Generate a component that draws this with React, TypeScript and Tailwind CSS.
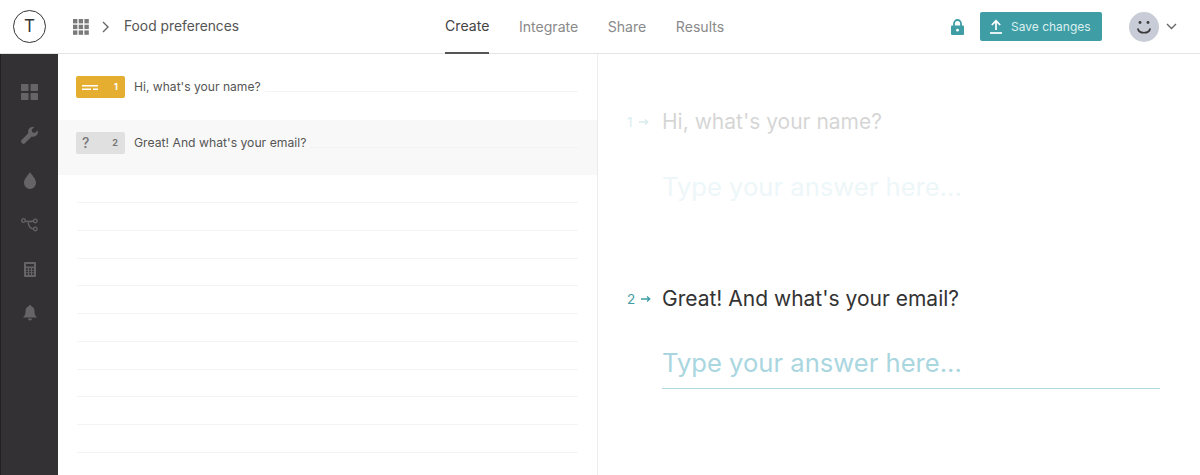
import React from 'react'

const font = { tabs: 'font-["Inter",sans-serif]' }

function GridIcon() {
  const cells = [0, 1, 2]
  return (
    <svg width="16" height="16" viewBox="0 0 16 16" fill="#7a7a7a">
      {cells.map(r => cells.map(c => <rect key={`${r}-${c}`} x={c * 5.7} y={r * 5.7} width="4.4" height="4.4" />))}
    </svg>
  )
}

function Lock() {
  return (
    <svg width="13" height="16" viewBox="0 0 13 16">
      <path d="M3 8V4.500a3.500 3.500 0 0 1 7 0V8" fill="none" stroke="#3f9ea5" strokeWidth="1.800" />
      <rect x="0" y="6.500" width="13" height="9.500" rx="1" fill="#3f9ea5" />
      <circle cx="6.500" cy="11.200" r="1.400" fill="#fff" />
    </svg>
  )
}

function Upload() {
  return (
    <svg width="14" height="15" viewBox="0 0 14 15" fill="none" stroke="#fff" strokeWidth="1.700">
      <path d="M7 11V2M2.800 6 7 1.800 11.200 6" />
      <path d="M1 14h12" />
    </svg>
  )
}

function Smiley() {
  return (
    <svg width="30" height="30" viewBox="0 0 30 30">
      <circle cx="15" cy="15" r="15" fill="#c8ccd6" />
      <circle cx="11" cy="10.500" r="1.400" fill="#3a3a3a" />
      <circle cx="19" cy="10.500" r="1.400" fill="#3a3a3a" />
      <path d="M9 17c1 5 11 5 12 0" fill="none" stroke="#3a3a3a" strokeWidth="1.700" strokeLinecap="round" />
    </svg>
  )
}

const sideIcons = [
  <svg key="a" width="17" height="16" viewBox="0 0 17 16" fill="#666467">
    <rect width="7.500" height="7" rx="0.800" /><rect x="9.500" width="7.500" height="7" rx="0.800" />
    <rect y="9" width="7.500" height="7" rx="0.800" /><rect x="9.500" y="9" width="7.500" height="7" rx="0.800" />
  </svg>,
  <svg key="b" width="17" height="17" viewBox="0 0 17 17" fill="#666467">
    <path d="M16.600 3.400 13.900 6l-2.600-.7-.7-2.600L13.200.2a4.600 4.600 0 0 0-5.800 5.900L.6 12.900a1.900 1.900 0 0 0 0 2.700l.6.6a1.900 1.900 0 0 0 2.700 0l6.900-6.800a4.600 4.600 0 0 0 5.800-6Z" />
  </svg>,
  <svg key="c" width="12" height="17" viewBox="0 0 12 17" fill="#666467">
    <path d="M6 0c1.500 3 6 6.500 6 11a6 6 0 0 1-12 0C0 6.500 4.500 3 6 0Z" />
  </svg>,
  <svg key="d" width="17" height="14" viewBox="0 0 17 14" fill="none" stroke="#666467" strokeWidth="1.300">
    <circle cx="2.500" cy="2.500" r="1.800" /><circle cx="14.300" cy="3" r="1.800" /><circle cx="14.300" cy="11" r="1.800" />
    <path d="M4.300 2.800c3 1 5 1 8.200.2M7 3.800c.5 4 2.500 6.800 5.500 7" />
  </svg>,
  <svg key="e" width="12" height="15" viewBox="0 0 12 15">
    <rect width="12" height="15" rx="1" fill="#666467" />
    <rect x="2" y="2" width="8" height="2.500" fill="#333133" />
    {[6.200, 8.700, 11.200].map(y => [2, 5, 8].map(x => <rect key={`${x}-${y}`} x={x} y={y} width="2" height="1.600" fill="#333133" />))}
  </svg>,
  <svg key="f" width="14" height="16" viewBox="0 0 14 16" fill="#666467">
    <path d="M7 0a1.200 1.200 0 0 1 1.200 1.300C10.500 2 11.500 3.800 11.500 6.500c0 3 .9 4.500 2.500 6H0c1.600-1.500 2.500-3 2.500-6 0-2.700 1-4.500 3.300-5.200A1.200 1.200 0 0 1 7 0Z" />
    <path d="M5 13.500h4a2 2 0 0 1-4 0Z" />
  </svg>,
]

function Arrow({ color }: { color: string }) {
  return (
    <svg width="10" height="8" viewBox="0 0 10 8" fill="none" stroke={color} strokeWidth="1.300">
      <path d="M0 4h8.500M6 1.500 8.800 4 6 6.500" />
    </svg>
  )
}

function Line() {
  return <div className="h-[27.75px] mx-[19px] border-b border-[#f4f4f4]" />
}

export default function App() {
  return (
    <div className={`h-[475px] w-[1200px] flex flex-col overflow-hidden bg-white ${font.tabs}`}>
      {/* top bar */}
      <header className="h-[54px] shrink-0 flex items-center border-b border-[#e4e4e4]">
        <div className="ml-[13px] w-[33px] h-[33px] rounded-full border border-[#333] flex items-center justify-center text-[17px] text-[#333]">T</div>
        <div className="ml-[27px] flex items-center">
          <GridIcon />
          <svg className="ml-[13px]" width="8" height="12" viewBox="0 0 8 12" fill="none" stroke="#666" strokeWidth="1.400"><path d="M1 1l5 5-5 5" /></svg>
          <span className="ml-[14px] text-[13.800px] text-[#555]">Food preferences</span>
        </div>
        <nav className="ml-[206px] h-full flex items-stretch gap-[29.500px] text-[14.100px] text-[#8a8a8a]">
          <span className="flex items-center text-[#444] border-b-2 border-[#555] -mb-px">Create</span>
          <span className="flex items-center">Integrate</span>
          <span className="flex items-center">Share</span>
          <span className="flex items-center">Results</span>
        </nav>
        <div className="ml-auto flex items-center">
          <Lock />
          <div className="ml-[16px] w-[122px] h-[29px] rounded-[2px] bg-[#3f9ea5] flex items-center pl-[9px] text-[12px] text-[#dcefef]">
            <Upload />
            <span className="ml-[8px]">Save changes</span>
          </div>
          <div className="ml-[27px]"><Smiley /></div>
          <svg className="ml-[7px] mr-[23px]" width="11" height="7" viewBox="0 0 11 7" fill="none" stroke="#666" strokeWidth="1.400"><path d="M1 1l4.500 4.500L10 1" /></svg>
        </div>
      </header>

      <div className="flex-1 flex min-h-0">
        {/* sidebar */}
        <aside className="w-[58px] shrink-0 bg-[#333133] border-l border-[#222] flex flex-col items-center pt-[29px] gap-[27.400px] [&>div]:h-[17px] [&>div]:flex [&>div]:items-center">
          {sideIcons.map((icon, i) => <div key={i}>{icon}</div>)}
        </aside>

        {/* question list */}
        <section className="w-[540px] shrink-0 border-r border-[#ececec] overflow-hidden">
          <div className="h-[38px] mx-[19px] border-b border-[#f4f4f4] flex items-end">
            <div className="mb-[-7px] ml-[-1px] bg-white pr-[4px] flex items-center">
              <div className="w-[49px] h-[22px] rounded-[2px] bg-[#e6ae30] flex items-center justify-between px-[6px] text-white text-[9px] font-bold">
                <svg width="16" height="5" viewBox="0 0 16 5" fill="#fff"><rect width="16" height="1.500" /><rect y="3.500" width="9" height="1.500" /><rect x="11" y="3.500" width="5" height="1.500" /></svg>
                <span className="mr-[1px]">1</span>
              </div>
              <span className="ml-[9px] mt-px text-[12.100px] text-[#555]">Hi, what's your name?</span>
            </div>
          </div>
          <div className="h-[27.750px]" />
          <div className="h-[55.500px] bg-[#f8f8f8] px-[19px]">
            <div className="h-[27.750px] border-b border-[#f2f2f2] flex items-end">
              <div className="mb-[-7px] ml-[-1px] bg-[#f8f8f8] pr-[4px] flex items-center">
                <div className="w-[49px] h-[22px] rounded-[2px] bg-[#e0e0e0] flex items-center justify-between px-[6px] text-[#777]">
                  <span className="text-[14px] leading-none font-medium">?</span>
                  <span className="text-[9px] font-bold mr-[1px]">2</span>
                </div>
                <span className="ml-[9px] mt-px text-[12.200px] text-[#555]">Great! And what's your email?</span>
              </div>
            </div>
          </div>
          {Array.from({ length: 11 }).map((_, i) => <Line key={i} />)}
        </section>

        {/* preview */}
        <main className="flex-1 pl-[29px] pt-[54px]">
          <div className="flex items-center h-[28px] opacity-20">
            <div className="w-[35px] flex items-center gap-[6px] text-[13.500px] text-[#3f9ea5]"><span>1</span><Arrow color="#3f9ea5" /></div>
            <span className="text-[21px] text-[#333]">Hi, what's your name?</span>
          </div>
          <div className="ml-[35px] mt-[33px] h-[36px] flex items-center text-[25.600px] text-[#a9d6df] opacity-20">Type your answer here...</div>
          <div className="mt-[80px] flex items-center h-[28px]">
            <div className="w-[35px] flex items-center gap-[6px] text-[13.500px] text-[#3f9ea5]"><span>2</span><Arrow color="#3f9ea5" /></div>
            <span className="text-[21px] text-[#333]">Great! And what's your email?</span>
          </div>
          <div className="ml-[35px] mt-[31px] h-[45px] pb-[5px] w-[498px] flex items-center text-[25.600px] text-[#a9d6df] border-b border-b-[#aadde2]">Type your answer here...</div>
        </main>
      </div>
    </div>
  )
}
